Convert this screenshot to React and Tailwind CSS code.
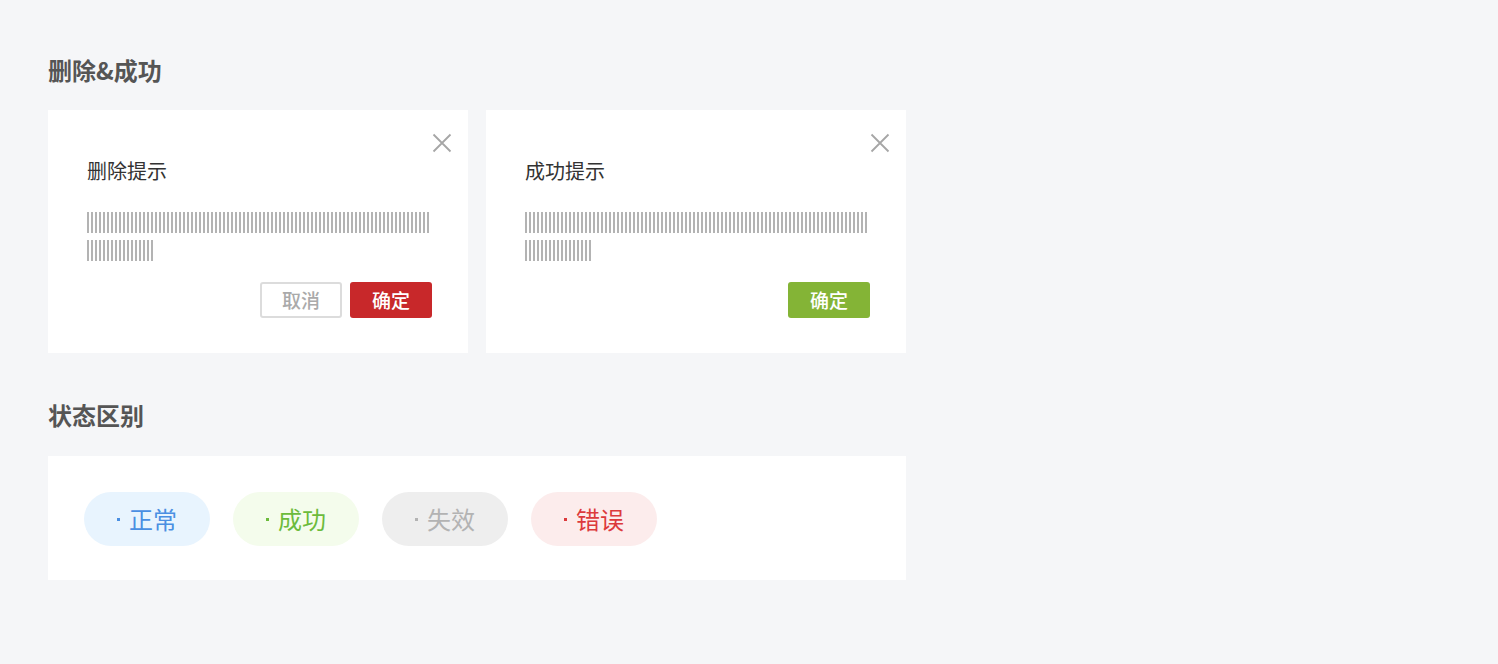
import React from 'react'

const font = { fontFamily: '"Noto Sans CJK SC", "Noto Sans", sans-serif' }

const CloseIcon = () => (
  <svg width="20" height="20" viewBox="0 0 20 20" className="absolute top-[23px] right-[16px]">
    <path d="M1.5 1.5 L18.5 18.5 M18.5 1.5 L1.5 18.5" stroke="#a6a6a6" strokeWidth="1.8" fill="none" />
  </svg>
)

// placeholder text lines drawn as thin bars
const Bars = () => (
  <div className="mt-[27px] flex flex-col gap-[7px]">
    <div className="h-[21px] w-[342px] bg-[repeating-linear-gradient(90deg,#b3b3b3_0_2px,transparent_2px_4px)]" />
    <div className="h-[21px] w-[66px] bg-[repeating-linear-gradient(90deg,#b3b3b3_0_2px,transparent_2px_4px)]" />
  </div>
)

const DialogCard = ({ title, children }) => (
  <div className="relative w-[420px] h-[243px] bg-white pl-[39px] pr-[36px] pt-[47px]">
    <CloseIcon />
    <div className="text-[20px] leading-[28px] text-[#333]">{title}</div>
    <Bars />
    <div className="mt-[21px] flex justify-end gap-[8px]">{children}</div>
  </div>
)

const pills = [
  { label: '正常', bg: 'bg-[#e8f4fe]', text: 'text-[#4a8fe2]' },
  { label: '成功', bg: 'bg-[#f4fcec]', text: 'text-[#6cbb3c]' },
  { label: '失效', bg: 'bg-[#eeeeee]', text: 'text-[#b3b3b3]' },
  { label: '错误', bg: 'bg-[#fcecec]', text: 'text-[#dc3a3c]' },
]

export default function App() {
  return (
    <div className="min-h-[664px] bg-[#f5f6f8] px-[48px] pt-[54px]" style={font}>
      <h2 className="text-[24px] leading-[32px] font-semibold text-[#555]">删除&amp;成功</h2>

      <div className="mt-[24px] flex gap-[18px]">
        <DialogCard title="删除提示">
          <button className="w-[82px] h-[36px] rounded-[3px] border-2 border-[#dcdcdc] bg-white text-[19px] font-medium text-[#aaa]">取消</button>
          <button className="w-[82px] h-[36px] rounded-[3px] bg-[#c8282a] text-[19px] font-medium text-white">确定</button>
        </DialogCard>
        <DialogCard title="成功提示">
          <button className="w-[82px] h-[36px] rounded-[3px] bg-[#84b436] text-[19px] font-medium text-white">确定</button>
        </DialogCard>
      </div>

      <h2 className="mt-[46px] text-[24px] leading-[32px] font-semibold text-[#555]">状态区别</h2>

      <div className="mt-[25px] w-[858px] h-[124px] bg-white pl-[36px] pt-[36px] flex gap-[23px] items-start">
        {pills.map((p) => (
          <div key={p.label} className={`w-[126px] h-[54px] rounded-full flex items-center justify-center text-[24px] ${p.bg} ${p.text}`}>
            <span className="mr-[9px] w-[3px] h-[3px] bg-current" />
            <span>{p.label}</span>
          </div>
        ))}
      </div>
    </div>
  )
}
